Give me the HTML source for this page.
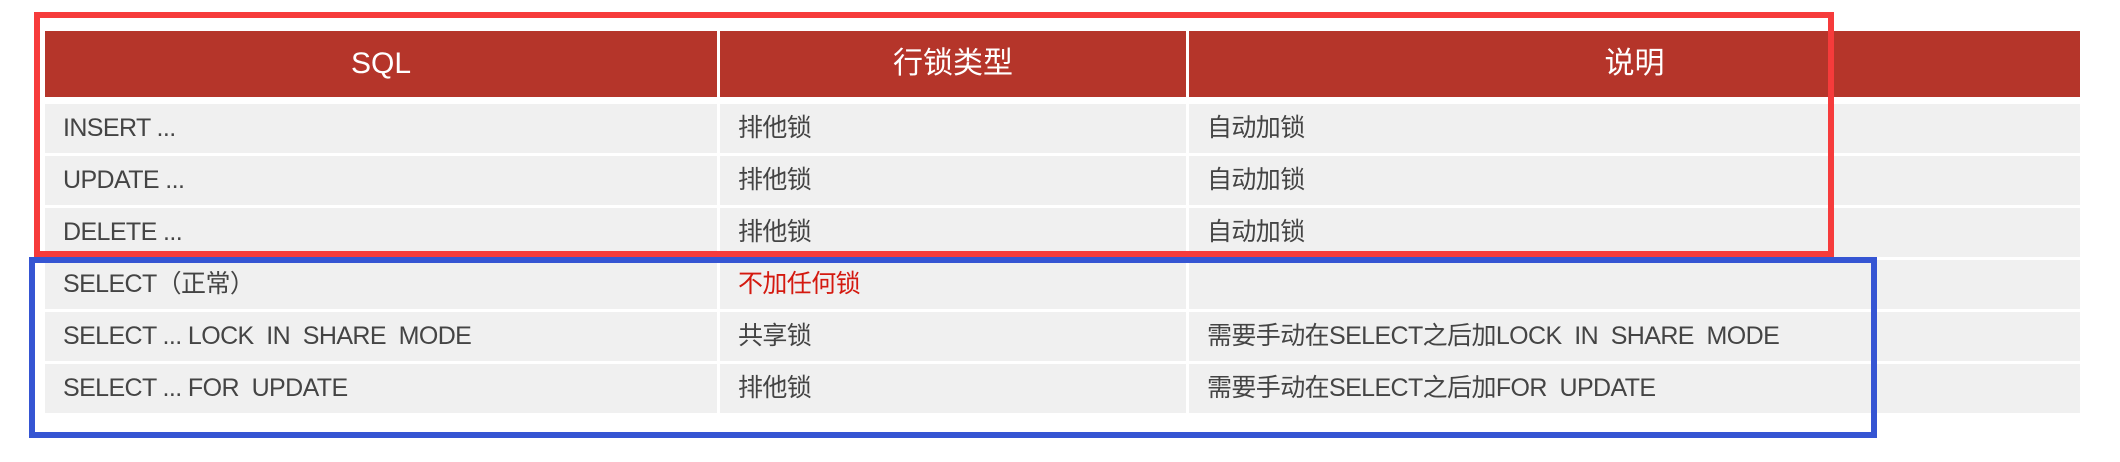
<!DOCTYPE html>
<html><head><meta charset="utf-8"><style>
body{margin:0;width:2120px;height:462px;background:#fff;position:relative;overflow:hidden;font-family:"Liberation Sans","Noto Sans CJK SC",sans-serif;}
.h{position:absolute;top:31px;height:66px;background:#b5352a;color:#fff;font-size:30px;line-height:66px;text-align:center;}
.r{position:absolute;height:49px;background:#f0f0f0;color:#444;font-size:25px;line-height:49px;padding-left:18px;box-sizing:border-box;white-space:nowrap;letter-spacing:-0.6px;}
.a{left:45px;width:672px}.b{left:720px;width:466px}.c{left:1189px;width:891px;padding-left:18px}
.box{position:absolute;box-sizing:border-box;}
</style></head><body>
<div class="h" style="left:45px;width:672px">SQL</div>
<div class="h" style="left:720px;width:466px">行锁类型</div>
<div class="h" style="left:1189px;width:891px">说明</div>

<div class="r a" style="top:104px">INSERT ...</div><div class="r b" style="top:104px">排他锁</div><div class="r c" style="top:104px">自动加锁</div>
<div class="r a" style="top:156px">UPDATE ...</div><div class="r b" style="top:156px">排他锁</div><div class="r c" style="top:156px">自动加锁</div>
<div class="r a" style="top:208px">DELETE ...</div><div class="r b" style="top:208px">排他锁</div><div class="r c" style="top:208px">自动加锁</div>
<div class="r a" style="top:260px">SELECT（正常）</div><div class="r b" style="top:260px;color:#d4190f">不加任何锁</div><div class="r c" style="top:260px"></div>
<div class="r a" style="top:312px">SELECT ... LOCK&nbsp; IN&nbsp; SHARE&nbsp; MODE</div><div class="r b" style="top:312px">共享锁</div><div class="r c" style="top:312px">需要手动在SELECT之后加LOCK&nbsp; IN&nbsp; SHARE&nbsp; MODE</div>
<div class="r a" style="top:364px">SELECT ... FOR&nbsp; UPDATE</div><div class="r b" style="top:364px">排他锁</div><div class="r c" style="top:364px">需要手动在SELECT之后加FOR&nbsp; UPDATE</div>

<div class="box" style="left:34px;top:12px;width:1800px;height:245px;border:6px solid #f63b3b"></div>
<div class="box" style="left:29px;top:257px;width:1848px;height:181px;border:6px solid #3555d3"></div>
</body></html>
